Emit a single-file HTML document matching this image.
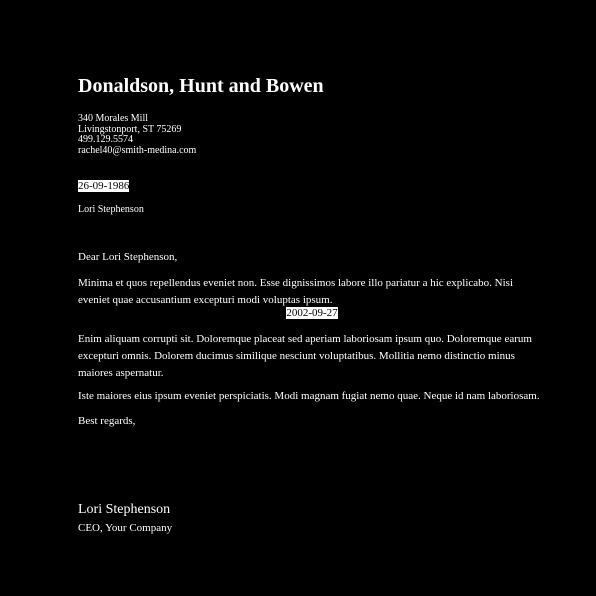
<!DOCTYPE html>
<html><head><meta charset="utf-8"><style>
html,body{margin:0;padding:0;background:#000;}
body{width:596px;height:596px;position:relative;color:#fff;font-family:"Liberation Serif",serif;overflow:hidden;}
.a{position:absolute;left:78px;white-space:nowrap;}
h1{position:absolute;left:78px;top:74px;margin:0;font-size:20px;font-weight:bold;line-height:24px;white-space:nowrap;}
.addr{top:114px;font-size:10px;line-height:10.5px;}
.d{background:#fff;color:#000;}
p{position:absolute;left:78px;width:458px;margin:0;font-size:11px;line-height:17px;}
</style></head><body>
<h1>Donaldson, Hunt and Bowen</h1>
<div class="a addr">340 Morales Mill<br>Livingstonport, ST 75269<br>499.129.5574<br>rachel40@smith-medina.com</div>
<div class="a" style="top:180px;font-size:11px;line-height:13px;"><span class="d">26-09-1986</span></div>
<div class="a" style="top:203px;font-size:10px;line-height:13px;">Lori Stephenson</div>
<p style="top:249px;">Dear Lori Stephenson,</p>
<p style="top:275px;">Minima et quos repellendus eveniet non. Esse dignissimos labore illo pariatur a hic explicabo. Nisi eveniet quae accusantium excepturi modi voluptas ipsum.</p>
<div style="position:absolute;left:78px;width:468px;top:307px;text-align:center;font-size:11px;line-height:13px;"><span class="d">2002-09-27</span></div>
<p style="top:331px;width:470px;">Enim aliquam corrupti sit. Doloremque placeat sed aperiam laboriosam ipsum quo. Doloremque earum excepturi omnis. Dolorem ducimus similique nesciunt voluptatibus. Mollitia nemo distinctio minus maiores aspernatur.</p>
<p style="top:388px;width:500px;">Iste maiores eius ipsum eveniet perspiciatis. Modi magnam fugiat nemo quae. Neque id nam laboriosam.</p>
<p style="top:413px;">Best regards,</p>
<div class="a" style="top:501px;font-size:14px;line-height:17px;">Lori Stephenson</div>
<div class="a" style="top:522px;font-size:11px;line-height:13px;">CEO, Your Company</div>
</body></html>
